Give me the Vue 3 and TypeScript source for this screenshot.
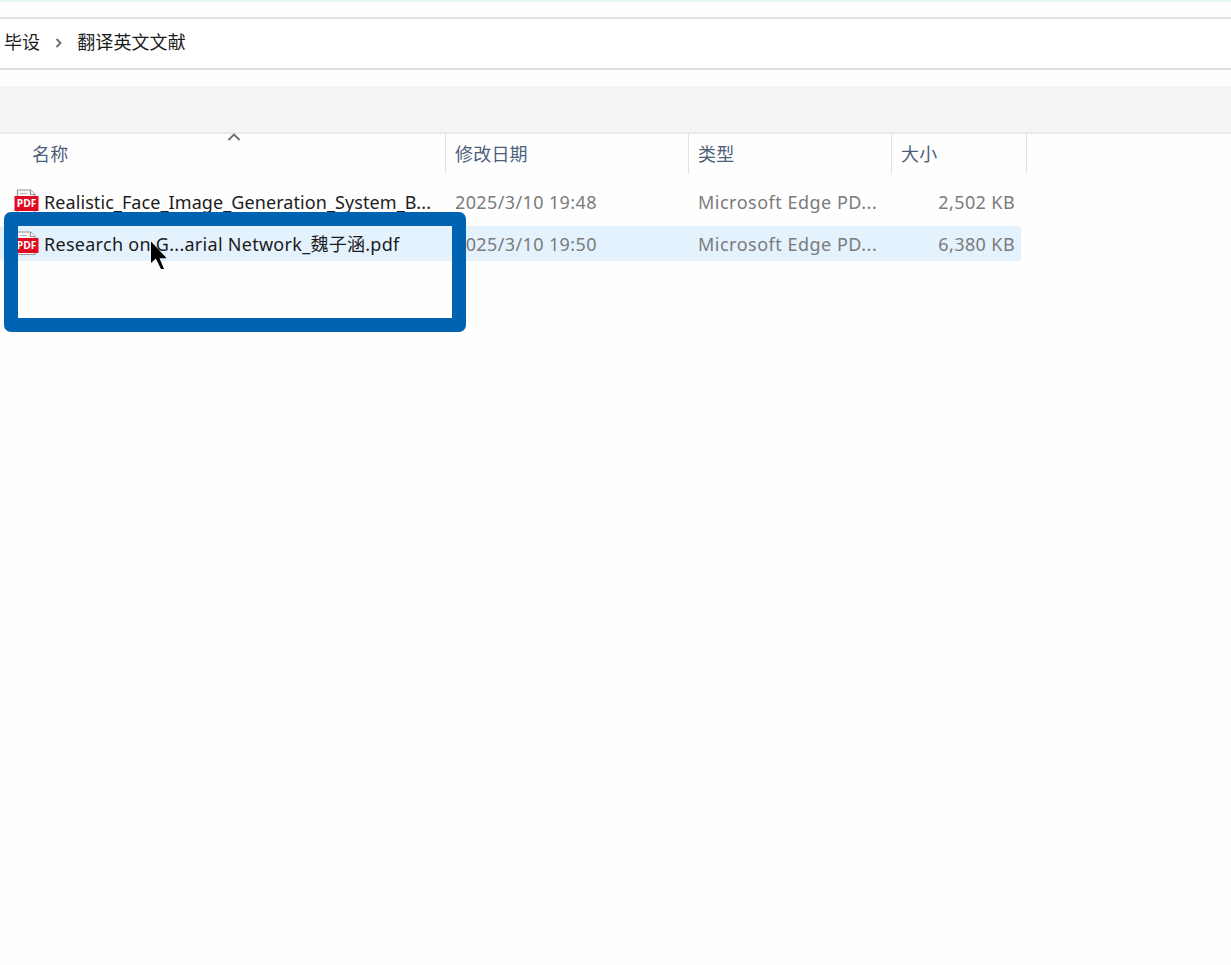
<script setup lang="ts">
interface FileRow {
  name: string
  date: string
  type: string
  size: string
  tone: string
}

const files: FileRow[] = [
  {
    name: 'Realistic_Face_Image_Generation_System_B...',
    date: '2025/3/10 19:48',
    type: 'Microsoft Edge PD...',
    size: '2,502 KB',
    tone: 'plain',
  },
  {
    name: 'Research on G...arial Network_魏子涵.pdf',
    date: '2025/3/10 19:50',
    type: 'Microsoft Edge PD...',
    size: '6,380 KB',
    tone: 'hovered',
  },
]
</script>

<template>
  <main class="explorer">
    <div class="top-edge"></div>
    <nav class="address">
      <span>毕设</span>
      <svg class="crumb-arrow" width="8" height="12" viewBox="0 0 8 12"><path d="M1.5 2 5.500 6 1.5 10" /></svg>
      <span>翻译英文文献</span>
    </nav>
    <div class="toolbar"></div>
    <header class="columns">
      <div class="col name-col">
        名称
        <svg class="sort" width="14" height="9" viewBox="0 0 14 9"><path d="M1.5 7 7 1.500l5.5 5.5" /></svg>
      </div>
      <div class="col date-col">修改日期</div>
      <div class="col type-col">类型</div>
      <div class="col size-col">大小</div>
    </header>
    <section class="files">
      <div v-for="file in files" :key="file.name" class="row" :class="file.tone">
        <svg class="pdf" width="25" height="25" viewBox="0 0 25 25">
          <path d="M3.5 1h13l4.500 4.500V23.500h-17.500z" fill="#f7f7f7" stroke="#969696" stroke-width="1.200" />
          <path d="M16.500 1v4.500H21" fill="#fff" stroke="#969696" stroke-width="1.200" />
          <path d="M6 4.500h7" stroke="#b8b8b8" stroke-width="1" />
          <rect x="0.500" y="7" width="24" height="15" fill="#e00b22" />
          <text x="12.500" y="18.300" text-anchor="middle" textLength="19.500" lengthAdjust="spacingAndGlyphs">PDF</text>
        </svg>
        <span class="name">{{ file.name }}</span>
        <span class="date">{{ file.date }}</span>
        <span class="type">{{ file.type }}</span>
        <span class="size">{{ file.size }}</span>
      </div>
    </section>
    <div class="highlight-frame"></div>
    <svg class="cursor" width="18" height="30" viewBox="0 0 18 30">
      <path d="M1 .5v21.500l4.800-4.500 5.200 10.500h3l-4.500-10.700h7.200z" />
    </svg>
  </main>
</template>

<style>
body {
  margin: 0;
  background: #fff;
}
</style>

<style scoped>
.explorer {
  position: relative;
  width: 1231px;
  height: 965px;
  overflow: hidden;
  background: #fefefe;
  font-family: "Noto Sans", "Noto Sans CJK SC", sans-serif;
  font-size: 18px;
  color: #1c1c1c;
}
.top-edge {
  height: 2px;
  margin-bottom: 15px;
  background: #e8f6f8;
}
.address {
  display: flex;
  align-items: center;
  box-sizing: border-box;
  height: 53px;
  padding: 0 0 5px 4px;
  border-top: 2px solid #dedfe0;
  border-bottom: 2px solid #dcdddd;
  background: #fff;
  letter-spacing: 0.1px;
}
.crumb-arrow {
  margin: 4px 14px 0 15px;
}
.crumb-arrow path,
.sort path {
  fill: none;
  stroke: #6c6c6c;
  stroke-width: 1.8;
}
.toolbar {
  box-sizing: border-box;
  height: 48px;
  margin-top: 16px;
  border-bottom: 2px solid #e9eaec;
  background: #f4f5f7;
}
.columns {
  display: flex;
  height: 40px;
  color: #4c607a;
  letter-spacing: 0.2px;
}
.col {
  position: relative;
  box-sizing: border-box;
  border-right: 1px solid #e2e3e5;
  padding-left: 9px;
  line-height: 40px;
}
.name-col { width: 446px; padding-left: 32px; }
.date-col { width: 243px; }
.type-col { width: 203px; }
.size-col { width: 135px; }
.sort {
  position: absolute;
  left: 227px;
  top: -1px;
}
.files {
  padding-top: 10px;
}
.row {
  display: flex;
  align-items: center;
  box-sizing: border-box;
  width: 1021px;
  height: 35px;
  margin-bottom: 7px;
  padding: 0 6px 0 14px;
  border-radius: 2px;
  white-space: nowrap;
  line-height: 35px;
  color: #7b7b7b;
}
.row span {
  padding-top: 1px;
}
.hovered {
  background: #e4f2fe;
}
.pdf {
  flex: none;
  margin-right: 5px;
}
.pdf text {
  fill: #fff;
  font: 700 10.5px "Open Sans", sans-serif;
}
.name {
  width: 411px;
  color: #1c1c1c;
  letter-spacing: 0.08px;
}
.hovered .name {
  letter-spacing: 0.28px;
}
.date {
  width: 243px;
  letter-spacing: 0.38px;
}
.type {
  width: 200px;
  letter-spacing: 0.5px;
}
.size {
  margin-left: auto;
  letter-spacing: 0.4px;
}
.highlight-frame {
  position: absolute;
  left: 4px;
  top: 212px;
  box-sizing: border-box;
  width: 462px;
  height: 120px;
  border: 14px solid #0063b1;
  border-radius: 7px;
}
.cursor {
  position: absolute;
  left: 150px;
  top: 241px;
}
.cursor path {
  fill: #000;
}
</style>
